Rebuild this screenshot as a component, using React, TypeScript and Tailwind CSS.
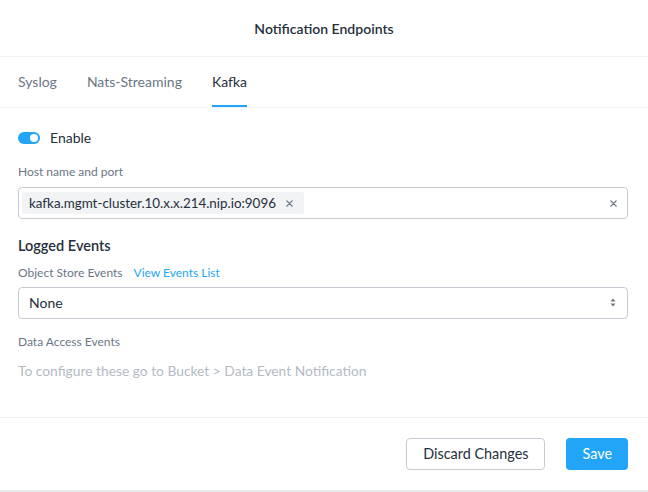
import * as React from 'react'

// ---------------------------------------------------------------------------
// Small pieces
// ---------------------------------------------------------------------------

function Toggle({ on }: { on: boolean }) {
  return (
    <span
      className={`relative inline-flex h-[12px] w-[22px] items-center rounded-full ${
        on ? 'bg-[#22a5f7]' : 'bg-[#c8ced6]'
      }`}
    >
      <span
        className={`absolute top-[2px] h-[8px] w-[8px] rounded-full bg-white ${
          on ? 'left-[12px]' : 'left-[2px]'
        }`}
      />
    </span>
  )
}

function ClearIcon({ className }: { className?: string }) {
  return (
    <svg width="7" height="7" viewBox="0 0 8 8" className={className}>
      <path d="M1 1L7 7M7 1L1 7" stroke="currentColor" strokeWidth="1.6" strokeLinecap="round" />
    </svg>
  )
}

function SortIcon() {
  return (
    <svg width="6" height="9" viewBox="0 0 6 9" className="text-[#6b7685]">
      <path d="M3 0.5L5.5 3.5H0.5Z M3 8.5L0.5 5.5H5.5Z" fill="currentColor" />
    </svg>
  )
}

// ---------------------------------------------------------------------------
// App
// ---------------------------------------------------------------------------

export default function App() {
  const tabs = ['Syslog', 'Nats-Streaming', 'Kafka']
  const active = 'Kafka'

  return (
    <div
      className="flex h-[492px] w-[648px] flex-col bg-white text-[#262f3b]"
      style={{ fontFamily: 'Lato, "Open Sans", sans-serif' }}
    >
      {/* Header */}
      <div className="flex h-[57px] items-center justify-center border-b border-[#eef0f3]">
        <h1 className="text-[14px] font-semibold">Notification Endpoints</h1>
      </div>

      {/* Tabs */}
      <div className="flex h-[51px] gap-[30px] border-b border-[#eef0f3] px-[18px]">
        {tabs.map((t) => (
          <div
            key={t}
            className={`flex items-center border-b-2 pt-[1px] text-[14px] ${
              t === active ? 'border-[#22a5f7] text-[#262f3b]' : 'border-transparent text-[#6b7685]'
            }`}
          >
            {t}
          </div>
        ))}
      </div>

      {/* Body */}
      <div className="flex flex-1 flex-col pl-[18px] pr-[20px] pt-[19px]">
        <div className="flex items-center gap-[10px]">
          <Toggle on />
          <span className="text-[14px]">Enable</span>
        </div>

        <label className="mt-[15px] text-[12px] text-[#6b7685]">Host name and port</label>
        <div className="mt-[6px] flex h-[32px] items-center rounded-[4px] border border-[#c7ccd4] pl-[3px] pr-[10px]">
          <span className="flex h-[22px] items-center gap-[10px] rounded-[3px] bg-[#f1f3f5] pl-[7px] pr-[11px] text-[13.4px]">
            kafka.mgmt-cluster.10.x.x.214.nip.io:9096
            <ClearIcon className="text-[#6b7685]" />
          </span>
          <span className="flex-1" />
          <ClearIcon className="text-[#6b7685]" />
        </div>

        <h2 className="mt-[16px] text-[14.5px] font-semibold">Logged Events</h2>

        <div className="mt-[7px] flex items-center gap-[11px] text-[12px]">
          <span className="text-[#6b7685]">Object Store Events</span>
          <span className="text-[#22a5f7]">View Events List</span>
        </div>
        <div className="mt-[5px] flex h-[32px] items-center justify-between rounded-[4px] border border-[#c7ccd4] pl-[10px] pr-[11px]">
          <span className="text-[14px]">None</span>
          <SortIcon />
        </div>

        <label className="mt-[14px] text-[12px] text-[#6b7685]">Data Access Events</label>
        <p className="mt-[10px] text-[13.8px] text-[#b3bac4]">
          To configure these go to Bucket &gt; Data Event Notification
        </p>
      </div>

      {/* Footer */}
      <div className="flex h-[73px] items-start justify-end gap-[21px] border-t border-[#eef0f3] px-[20px] pt-[20px]">
        <button className="h-[32px] rounded-[4px] border border-[#c7ccd4] bg-white px-[16px] text-[14.4px] text-[#262f3b]">
          Discard Changes
        </button>
        <button className="h-[32px] rounded-[4px] bg-[#22a5f7] px-[16px] text-[14.4px] text-white">
          Save
        </button>
      </div>
      <div className="h-[2px] bg-[#e8ebef]" />
    </div>
  )
}
